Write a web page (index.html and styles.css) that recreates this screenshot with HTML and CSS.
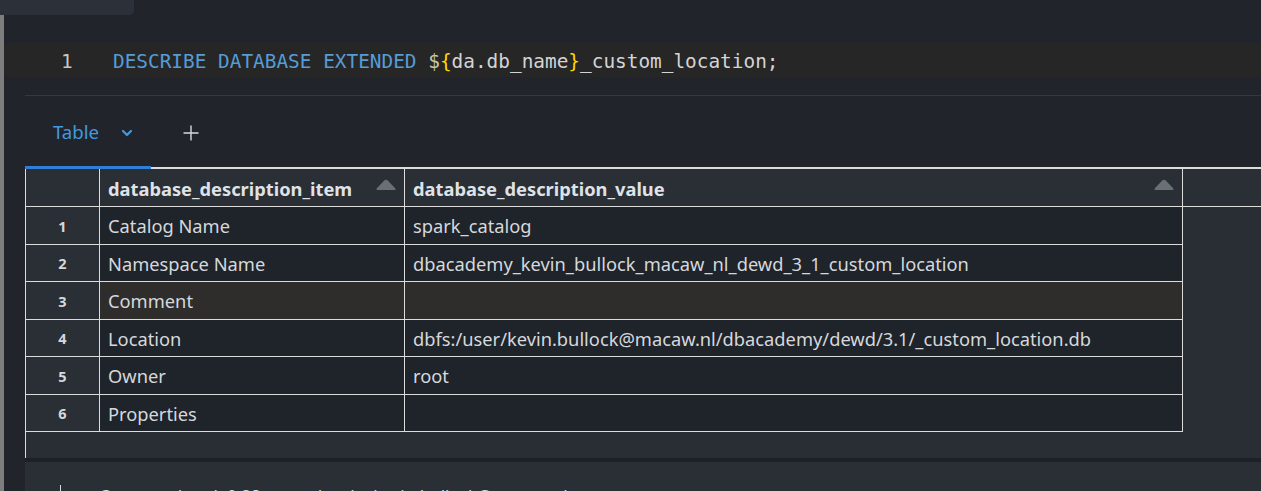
FILE: index.html
```html
<!DOCTYPE html>
<html>
<head>
<meta charset="utf-8">
<link rel="stylesheet" href="styles.css">
</head>
<body>
<div class="topbox"></div>
<div class="app">
  <div class="strip"></div>
  <div class="main">
    <div class="code-line">
      <span class="ln">1</span>
      <code class="code"><span class="kw">DESCRIBE DATABASE EXTENDED</span> <span class="dl">$</span><span class="br">{</span>da.db_name<span class="br">}</span>_custom_location;</code>
    </div>
    <div class="panel">
      <div class="tabs">
        <div class="tab">
          <span class="tab-label">Table</span>
          <svg class="chev" width="12" height="8" viewBox="0 0 12 8"><path d="M2 2 L6 6 L10 2" fill="none" stroke="#4299e1" stroke-width="2.2" stroke-linecap="round" stroke-linejoin="round"/></svg>
        </div>
        <svg class="plus" width="16" height="16" viewBox="0 0 16 16"><path d="M8 0.5 V15.5 M0.5 8 H15.5" stroke="#d8dadd" stroke-width="1.4"/></svg>
      </div>
      <div class="grid">
        <div class="row head">
          <div class="cell idx"></div>
          <div class="cell hcell"><span>database_description_item</span><svg class="sort" width="22" height="12" viewBox="0 0 22 12"><path d="M9.3 1.6 Q11 0 12.7 1.6 L20 9 Q21.5 11 19 11 H3 Q0.5 11 2 9 Z" fill="#6a6e75"/></svg></div>
          <div class="cell hcell"><span>database_description_value</span><svg class="sort" width="22" height="12" viewBox="0 0 22 12"><path d="M9.3 1.6 Q11 0 12.7 1.6 L20 9 Q21.5 11 19 11 H3 Q0.5 11 2 9 Z" fill="#6a6e75"/></svg></div>
          <div class="cell fill"></div>
        </div>
        <div class="row">
          <div class="cell idx">1</div><div class="cell">Catalog Name</div><div class="cell">spark_catalog</div><div class="cell fill"></div>
        </div>
        <div class="row">
          <div class="cell idx">2</div><div class="cell">Namespace Name</div><div class="cell">dbacademy_kevin_bullock_macaw_nl_dewd_3_1_custom_location</div><div class="cell fill"></div>
        </div>
        <div class="row hover">
          <div class="cell idx">3</div><div class="cell">Comment</div><div class="cell"></div><div class="cell fill"></div>
        </div>
        <div class="row">
          <div class="cell idx">4</div><div class="cell">Location</div><div class="cell">dbfs:/user/kevin.bullock@macaw.nl/dbacademy/dewd/3.1/_custom_location.db</div><div class="cell fill"></div>
        </div>
        <div class="row">
          <div class="cell idx">5</div><div class="cell">Owner</div><div class="cell">root</div><div class="cell fill"></div>
        </div>
        <div class="row">
          <div class="cell idx">6</div><div class="cell">Properties</div><div class="cell"></div><div class="cell fill"></div>
        </div>
        <div class="grid-pad"></div>
      </div>
      <div class="sep"></div>
      <div class="footer"><span class="bar"></span><span class="ftext">Command took 0.38 seconds -- by kevin.bullock@macaw.nl</span></div>
    </div>
  </div>
</div>
</body>
</html>
```
FILE: styles.css
```css
html, body {
  margin: 0;
  padding: 0;
  background: #21252b;
  height: 491px;
  overflow: hidden;
  font-family: "Noto Sans", "Open Sans", sans-serif;
}
.topbox {
  width: 134px;
  height: 15px;
  background: #2c3139;
  border-bottom-right-radius: 5px;
}
.app {
  display: flex;
  height: 476px;
}
.strip {
  width: 4px;
  background: #7d7d7d;
  flex: none;
}
.main {
  flex: 1;
  padding-top: 28px;
  min-width: 0;
}
.code-line {
  height: 34px;
  background: #262626;
  display: flex;
  align-items: center;
  padding-top: 2px;
  box-sizing: border-box;
  font-family: "DejaVu Sans Mono", monospace;
  font-size: 19.4px;
}
.ln {
  width: 109px;
  padding-left: 57px;
  box-sizing: border-box;
  color: #c6c6c6;
  flex: none;
}
.code {
  font-family: inherit;
  color: #d4d4d4;
  white-space: pre;
}
.kw { color: #569cd6; }
.dl { color: #c5c8a6; }
.br { color: #ffd700; }
.panel {
  margin-top: 18px;
  margin-left: 21px;
  border-top: 1px solid #343941;
}
.tabs {
  height: 71px;
  display: flex;
  align-items: stretch;
  border-bottom: 2px solid #dcdcdc;
  box-sizing: content-box;
}
.tab {
  width: 126px;
  box-sizing: border-box;
  margin-bottom: -2px;
  border-bottom: 3px solid #2f7fd8;
  display: flex;
  align-items: center;
  padding-left: 28px;
  padding-top: 1px;
  gap: 22px;
}
.tab-label {
  color: #4299e1;
  font-size: 18.6px;
}
.chev { margin-top: 2px; }
.plus {
  align-self: center;
  margin-left: 32px;
  margin-top: 2px;
}
.grid {
  border-left: 1px solid #dcdcdc;
  background: #292d34;
}
.row {
  display: grid;
  grid-template-columns: 74px 305px 778px 1fr;
  height: 37.5px;
}
.row.head { height: 38px; }
.cell {
  box-sizing: border-box;
  border-right: 1px solid #dcdcdc;
  border-bottom: 1px solid #dcdcdc;
  background: #1f232a;
  color: #d5d8dc;
  font-size: 18.3px;
  display: flex;
  align-items: center;
  padding-left: 8px;
  padding-top: 1px;
  white-space: nowrap;
  overflow: hidden;
}
.cell.idx {
  background: #2a2e35;
  justify-content: center;
  padding-left: 0;
  font-size: 14.5px;
  font-weight: 700;
  color: #d5d8dc;
}
.row.hover .cell:not(.idx):not(.fill) { background: #2e2d2c; }
.cell.fill {
  background: #292d34;
  border: none;
}
.head .cell { background: #2a2e35; }
.head .cell.fill { border-bottom: 1px solid #dcdcdc; }
.hcell {
  font-weight: 700;
  color: #dfe2e6;
  justify-content: space-between;
  padding-right: 7px;
}
.sort {
  margin-bottom: 6px;
  flex: none;
}
.grid-pad {
  height: 26px;
}
.sep {
  height: 4px;
  background: #1d2026;
}
.footer {
  height: 40px;
  background: #2a2e35;
  display: flex;
  align-items: flex-start;
  padding-top: 22px;
  box-sizing: border-box;
  color: #d5d8dc;
  font-size: 17px;
  line-height: 24px;
}
.bar {
  width: 1px;
  height: 20px;
  background: #d5d8dc;
  margin-left: 35px;
  margin-top: 1px;
}
.ftext {
  margin-left: 38px;
}
```
